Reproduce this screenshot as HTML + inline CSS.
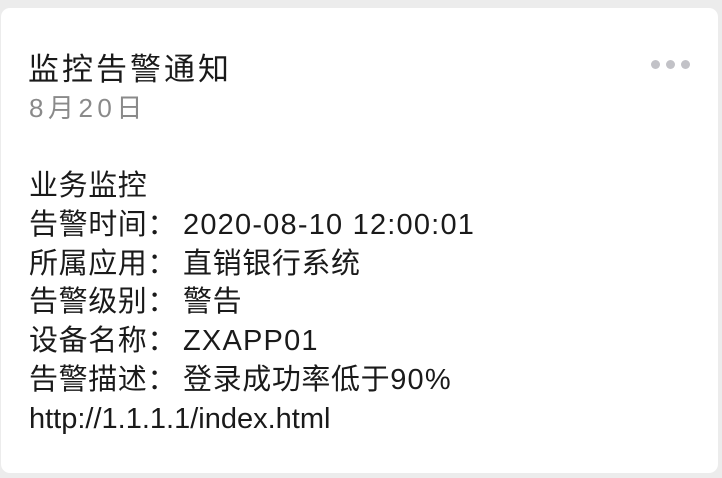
<!DOCTYPE html>
<html><head><meta charset="utf-8"><style>
html,body{margin:0;padding:0;width:722px;height:478px;background:#ececec;overflow:hidden}
.card{position:absolute;left:1px;top:8px;width:717px;height:465px;background:#fff;border-radius:9px}
body{font-family:"Liberation Sans","Noto Sans CJK SC",sans-serif;color:#1a1a1a}
.t{position:absolute;left:28px;top:50px;font-size:31px;line-height:40px;white-space:nowrap;letter-spacing:3px}
.d{position:absolute;left:29px;top:92px;font-size:26px;line-height:32px;color:#8a8a8a;letter-spacing:4.5px}
.b{position:absolute;left:29px;top:167px;font-size:29px;line-height:38.8px;white-space:nowrap;letter-spacing:0.6px}
.n{letter-spacing:1.2px}
.c{margin-right:6px}
.dots{position:absolute;left:651px;top:56px}
.dots i{display:inline-block;width:9px;height:9px;border-radius:50%;background:#c2c2c7;margin-right:6px}
</style></head><body>
<div class="card"></div>
<div class="t">监控告警通知</div>
<div class="d">8月20日</div>
<div class="dots"><i></i><i></i><i></i></div>
<div class="b">业务监控<br>告警时间<span class="c">：</span><span class="n">2020-08-10 12:00:01</span><br>所属应用<span class="c">：</span>直销银行系统<br>告警级别<span class="c">：</span>警告<br>设备名称<span class="c">：</span><span class="n">ZXAPP01</span><br>告警描述<span class="c">：</span>登录成功率低于<span class="n">90%</span><br><span style="letter-spacing:0">http://1.1.1.1/index.html</span></div>
</body></html>
